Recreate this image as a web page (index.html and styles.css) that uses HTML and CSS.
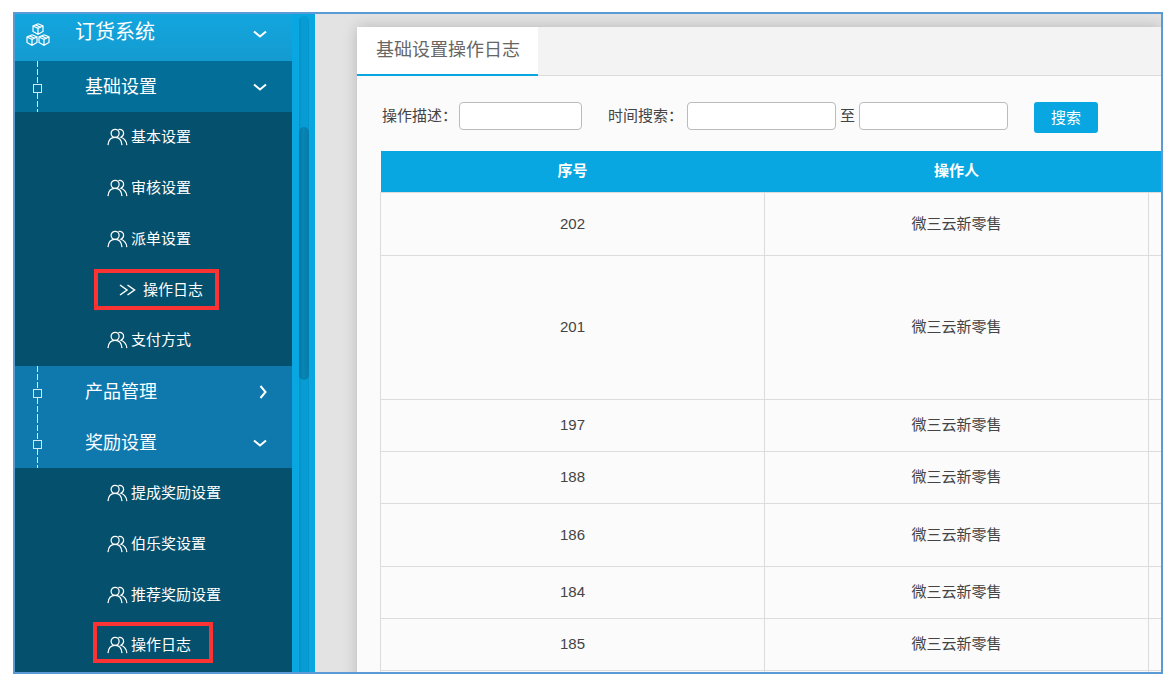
FILE: index.html
```html
<!DOCTYPE html>
<html lang="zh-CN">
<head>
<meta charset="utf-8">
<meta name="viewport" content="width=device-width, initial-scale=1">
<title>基础设置操作日志</title>
<link rel="stylesheet" href="styles.css">
</head>
<body>
<svg class="defs" aria-hidden="true">
  <symbol id="users" viewBox="0 0 22 18">
    <circle cx="8.500" cy="5.200" r="4.200"/>
    <path d="M1 17.500C1.400 12.500 4.300 9.400 8.500 9.400s6.800 3.100 7.200 8.100M12 1.200c3.300-.8 5.400 1.200 5.400 3.900 0 1.900-1 3.400-2.900 4.200 3.500 1.200 5.900 4.200 6.300 8.200"/>
  </symbol>
  <symbol id="down" viewBox="0 0 14 14"><path d="M1 4.500 7 9.500 13 4.500"/></symbol>
  <symbol id="right" viewBox="0 0 14 14"><path d="M7.500 1 12.500 7 7.500 13"/></symbol>
  <symbol id="double" viewBox="0 0 17 14"><path d="M1 2 8 7 1 12M8.500 2 15.500 7 8.500 12"/></symbol>
  <symbol id="cube" viewBox="0 0 12 12">
    <path d="M6 .8 11 3v5.500L6 11.200 1 8.500V3zM1 3l5 2.400L11 3M6 5.400v5.800M3.500 1.900l5 2.300"/>
  </symbol>
</svg>
<div class="frame">
  <aside class="sidebar">
    <nav class="menu">
      <a class="root" href="#">
        <svg class="cubes" viewBox="0 0 24 24" aria-hidden="true">
          <use href="#cube" x="6" y="0" width="12" height="12"/>
          <use href="#cube" x="0" y="11" width="12" height="12"/>
          <use href="#cube" x="12" y="11" width="12" height="12"/>
        </svg>
        <span>订货系统</span>
        <svg class="arrow"><use href="#down"/></svg>
      </a>
      <a class="group open" href="#"><i class="node"></i><span>基础设置</span><svg class="arrow"><use href="#down"/></svg></a>
      <ul class="items">
        <li><a href="#"><svg class="users"><use href="#users"/></svg>基本设置</a></li>
        <li><a href="#"><svg class="users"><use href="#users"/></svg>审核设置</a></li>
        <li><a href="#"><svg class="users"><use href="#users"/></svg>派单设置</a></li>
        <li><a class="marked current" href="#"><svg class="double"><use href="#double"/></svg>操作日志</a></li>
        <li><a href="#"><svg class="users"><use href="#users"/></svg>支付方式</a></li>
      </ul>
      <a class="group" href="#"><i class="node"></i><span>产品管理</span><svg class="arrow"><use href="#right"/></svg></a>
      <a class="group" href="#"><i class="node"></i><span>奖励设置</span><svg class="arrow"><use href="#down"/></svg></a>
      <ul class="items">
        <li><a href="#"><svg class="users"><use href="#users"/></svg>提成奖励设置</a></li>
        <li><a href="#"><svg class="users"><use href="#users"/></svg>伯乐奖设置</a></li>
        <li><a href="#"><svg class="users"><use href="#users"/></svg>推荐奖励设置</a></li>
        <li><a class="marked raised" href="#"><svg class="users"><use href="#users"/></svg>操作日志</a></li>
      </ul>
    </nav>
    <div class="rail"><div class="track"><div class="thumb"></div></div></div>
  </aside>
  <main class="page">
    <section class="panel">
      <div class="tabs"><a class="tab" href="#">基础设置操作日志</a></div>
      <form class="filters">
        <div class="field">
          <label for="desc">操作描述：</label>
          <input id="desc" class="short" type="text">
        </div>
        <div class="field range">
          <label for="from">时间搜索：</label>
          <input id="from" type="text">
          <label for="to">至</label>
          <input id="to" type="text">
        </div>
        <button type="button">搜索</button>
      </form>
      <table class="log">
        <colgroup><col class="wide"><col class="wide"><col></colgroup>
        <thead><tr><th>序号</th><th>操作人</th><th></th></tr></thead>
        <tbody>
          <tr class="medium"><td>202</td><td>微三云新零售</td><td></td></tr>
          <tr class="tall"><td>201</td><td>微三云新零售</td><td></td></tr>
          <tr><td>197</td><td>微三云新零售</td><td></td></tr>
          <tr><td>188</td><td>微三云新零售</td><td></td></tr>
          <tr class="medium"><td>186</td><td>微三云新零售</td><td></td></tr>
          <tr><td>184</td><td>微三云新零售</td><td></td></tr>
          <tr><td>185</td><td>微三云新零售</td><td></td></tr>
          <tr><td></td><td></td><td></td></tr>
        </tbody>
      </table>
    </section>
  </main>
</div>
</body>
</html>
```
FILE: styles.css
```css
* { box-sizing: border-box; }

body {
  margin: 0;
  height: 100vh;
  padding: 12px 9px 7px 13px;
  overflow: hidden;
  background: #fff;
  color: #444;
  font: 15px/20px "Liberation Sans", "Noto Sans CJK SC", sans-serif;
}

a { color: inherit; text-decoration: none; }
ul { margin: 0; padding: 0; list-style: none; }
.defs { display: none; }
svg { flex: none; fill: none; stroke: currentColor; }

.frame {
  display: flex;
  height: 100%;
  overflow: hidden;
  border: 2px solid #5b9bd5;
  background: #e3e3e3;
}

/* Sidebar */
.sidebar { display: flex; flex: none; color: #fff; }
.menu { width: 277px; background: #05506c; }

.root {
  display: flex;
  align-items: center;
  height: 47px;
  padding: 0 25px 12px 11px;
  background: linear-gradient(#12a6de, #149bd0);
  font-size: 20px;
}
.root span { flex: 1; margin-left: 25px; }
.root .arrow { margin-top: 4px; }
.cubes { width: 24px; height: 24px; margin-top: 6px; stroke-width: 1.2; }
.arrow { width: 14px; height: 14px; stroke-width: 2; }

.group {
  display: flex;
  align-items: center;
  height: 51px;
  padding: 0 25px 0 18px;
  background: #0f79ae;
  font-size: 18px;
}
.group.open { background: #036e98; }
.group span { flex: 1; margin-left: 43px; }

/* Tree line with a square knot in the middle */
.node {
  display: flex;
  flex-direction: column;
  align-items: center;
  gap: 9px;
  width: 9px;
  height: 51px;
  color: #d4e8f2;
  background:
    linear-gradient(currentColor, currentColor) 0 23px / 9px 1px no-repeat,
    linear-gradient(currentColor, currentColor) 0 31px / 9px 1px no-repeat,
    linear-gradient(currentColor, currentColor) 0 23px / 1px 9px no-repeat,
    linear-gradient(currentColor, currentColor) 8px 23px / 1px 9px no-repeat;
}
.node::before, .node::after {
  content: "";
  flex: 1;
  width: 1px;
  background: repeating-linear-gradient(currentColor 0 6px, transparent 6px 8px);
}
.node::before { flex: 0 0 23px; }

.items li {
  display: flex;
  align-items: center;
  height: 51px;
  padding: 0 0 2px 92px;
}
.items li:last-child { height: 50px; }
.items a {
  position: relative;
  display: flex;
  align-items: center;
  gap: 3px;
  height: 41px;
}
.items .current { gap: 7px; padding-left: 12px; }
.marked::after {
  content: "";
  position: absolute;
  inset: 0 -16px 0 -13px;
  border: 4px solid #fb3433;
}
.marked.raised::after { inset: -3px -22px 3px -14px; }
.users { width: 21px; height: 18px; stroke-width: 1.3; }
.double { width: 17px; height: 14px; stroke-width: 1.5; }

.rail { width: 23px; padding: 2px 6px 0 7px; background: #08a7e1; }
.track {
  height: 100%;
  padding-top: 111px;
  border-radius: 5px 5px 0 0;
  background: linear-gradient(90deg, #078fc2, #079dd4 30%, #079dd4 80%, #0895ca);
}
.thumb {
  height: 253px;
  border-radius: 5px;
  background: linear-gradient(90deg, #0676a4, #0786b5 40%, #077ba9);
}

/* Content */
.page { flex: 1; min-width: 0; padding: 13px 0 0 42px; }
.panel {
  min-height: 100%;
  background: #fbfbfb;
  box-shadow: 0 0 14px rgba(0, 0, 0, .2);
}
.tabs { display: flex; height: 49px; border-bottom: 1px solid #dcdcdc; background: #f3f3f3; }
.tab {
  height: 49px;
  padding: 0 18px 0 19px;
  border-bottom: 2px solid #08a7e1;
  background: #fff;
  color: #666;
  font-size: 18px;
  line-height: 46px;
}

.filters { display: flex; align-items: flex-start; height: 75px; padding: 26px 25px 0; }
.field { display: flex; align-items: center; gap: 2px; margin-right: 26px; }
.range { gap: 4px; }
input {
  width: 149px;
  height: 28px;
  padding: 0 6px;
  border: 1px solid #bbb;
  border-radius: 4px;
  background: #fff;
  font: inherit;
}
input.short { width: 123px; }
button {
  flex: none;
  width: 64px;
  height: 31px;
  padding: 0;
  border: 0;
  border-radius: 3px;
  background: #08a7e1;
  color: #fff;
  font: inherit;
}

.log {
  width: calc(100% - 23px);
  margin-left: 23px;
  border-collapse: collapse;
  table-layout: fixed;
  text-align: center;
}
.wide { width: 49.2%; }
th { height: 41px; padding: 0; background: #08a7e1; color: #fff; }
td { height: 52px; padding: 0; border: 1px solid #dcdcdc; }
td:last-child { border-right: 0; }
.medium td { height: 63px; }
.tall td { height: 144px; }
```
